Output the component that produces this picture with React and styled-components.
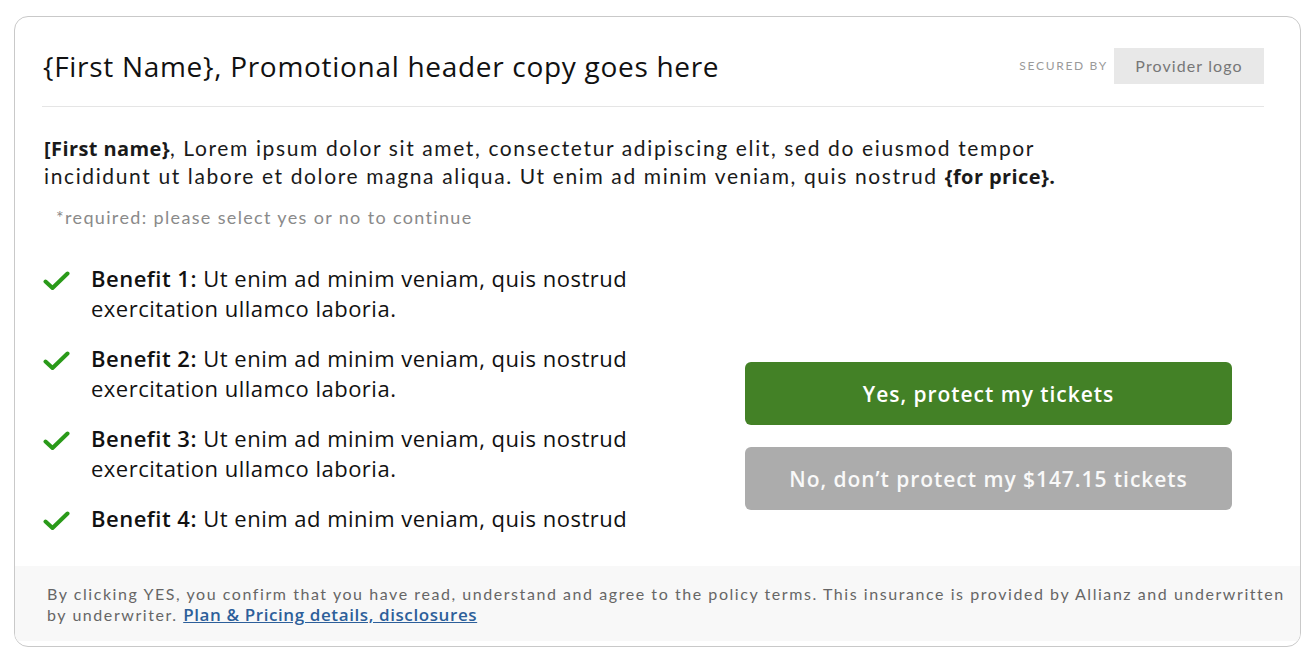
import React from "react";
import styled, { createGlobalStyle } from "styled-components";

const Global = createGlobalStyle`
  html, body { margin: 0; padding: 0; background: #fff; }
  body { width: 1312px; height: 664px; overflow: hidden; }
  * { box-sizing: border-box; }
`;

const Page = styled.div`
  padding: 16px 12px 0 14px;
`;

const Card = styled.div`
  width: 1287px;
  height: 631px;
  border: 1px solid #c9c9c9;
  border-radius: 14px;
  padding-bottom: 5px;
  display: flex;
  flex-direction: column;
  overflow: hidden;
  background: #fff;
`;

const Header = styled.div`
  margin: 0 36px 0 27px;
  height: 90px;
  display: flex;
  align-items: center;
  justify-content: space-between;
  border-bottom: 1px solid #e5e5e5;
  padding-top: 8px;
`;

const Title = styled.h1`
  margin: 0;
  font-family: "Open Sans", sans-serif;
  font-weight: 500;
  font-size: 28px;
  letter-spacing: 0.7px;
  color: #111;
  padding-left: 1px;
`;

const Secured = styled.div`
  display: flex;
  align-items: center;
  gap: 6px;
`;

const SecuredLabel = styled.span`
  font-family: "Lato", sans-serif;
  font-size: 12px;
  letter-spacing: 1.7px;
  color: #9a9a9a;
`;

const LogoBox = styled.div`
  width: 150px;
  height: 36px;
  background: #e8e8e8;
  display: flex;
  align-items: center;
  justify-content: center;
  font-family: "Lato", sans-serif;
  font-size: 16px;
  letter-spacing: 1.1px;
  color: #777;
`;

const Body = styled.div`
  flex: 1;
  overflow: hidden;
  padding: 27px 28px 0 28px;
`;

const Intro = styled.p`
  margin: 0;
  padding-left: 1px;
  font-family: "Lato", sans-serif;
  font-size: 21px;
  line-height: 27px;
  letter-spacing: 1.62px;
  color: #1a1a1a;
`;

const Strong = styled.strong`
  font-family: "Open Sans", sans-serif;
  font-weight: 700;
  font-size: 20px;
  letter-spacing: 0.4px;
`;

const Required = styled.p`
  margin: 16px 0 0 13px;
  font-family: "Lato", sans-serif;
  font-size: 18px;
  letter-spacing: 1.35px;
  color: #8a8a8a;
`;

const Row = styled.div`
  display: flex;
  justify-content: space-between;
  margin-top: 35px;
`;

const Benefits = styled.ul`
  list-style: none;
  margin: 0;
  padding: 0;
  width: 620px;
  display: flex;
  flex-direction: column;
  gap: 20px;
`;

const Benefit = styled.li`
  display: flex;
  gap: 21px;
  align-items: flex-start;
`;

const CheckIcon = styled.svg`
  flex: none;
  width: 27px;
  height: 20px;
  margin-top: 8px;
`;

const BenefitText = styled.div`
  width: 548px;
  font-family: "Open Sans", sans-serif;
  font-size: 22px;
  line-height: 30px;
  letter-spacing: 0.5px;
  color: #111;
`;

const BenefitLabel = styled.span`
  font-weight: 600;
`;

const Actions = styled.div`
  width: 487px;
  margin-right: 40px;
  padding-top: 99px;
  display: flex;
  flex-direction: column;
  gap: 22px;
`;

const Button = styled.button`
  height: 63px;
  border: none;
  border-radius: 6px;
  background: ${(p) => (p.$primary ? "#438126" : "#acacac")};
  color: ${(p) => (p.$primary ? "#fff" : "#f9f9f9")};
  font-family: "Open Sans", sans-serif;
  font-weight: 600;
  font-size: 21px;
  letter-spacing: 0.95px;
  cursor: pointer;
`;

const Footer = styled.div`
  height: 75px;
  background: #f8f8f8;
  padding: 17px 10px 0 32px;
  font-family: "Lato", sans-serif;
  font-size: 16px;
  line-height: 21px;
  letter-spacing: 1.56px;
  color: #666;
`;

const Link = styled.a`
  font-family: "Open Sans", sans-serif;
  font-weight: 600;
  font-size: 17px;
  letter-spacing: 0.6px;
  color: #2d5f9a;
  text-decoration: underline;
`;

const Check = () => (
  <CheckIcon viewBox="0 0 27 20">
    <path
      d="M2.5 10.5 L9.5 17 L24.5 2.5"
      fill="none"
      stroke="#2a9a19"
      strokeWidth="4"
      strokeLinecap="round"
      strokeLinejoin="round"
    />
  </CheckIcon>
);

const benefits = [
  { n: 1, text: "Ut enim ad minim veniam, quis nostrud exercitation ullamco laboria." },
  { n: 2, text: "Ut enim ad minim veniam, quis nostrud exercitation ullamco laboria." },
  { n: 3, text: "Ut enim ad minim veniam, quis nostrud exercitation ullamco laboria." },
  { n: 4, text: "Ut enim ad minim veniam, quis nostrud" },
];

export default function App() {
  return (
    <Page>
      <Global />
      <Card>
        <Header>
          <Title>{"{First Name}, Promotional header copy goes here"}</Title>
          <Secured>
            <SecuredLabel>SECURED BY</SecuredLabel>
            <LogoBox>Provider logo</LogoBox>
          </Secured>
        </Header>
        <Body>
          <Intro>
            <Strong>{"[First name}"}</Strong>, Lorem ipsum dolor sit amet,
            consectetur adipiscing elit, sed do eiusmod tempor
            <br />
            incididunt ut labore et dolore magna aliqua. Ut enim ad minim
            veniam, quis nostrud <Strong>{"{for price}."}</Strong>
          </Intro>
          <Required>*required: please select yes or no to continue</Required>
          <Row>
            <Benefits>
              {benefits.map((b) => (
                <Benefit key={b.n}>
                  <Check />
                  <BenefitText>
                    <BenefitLabel>Benefit {b.n}:</BenefitLabel> {b.text}
                  </BenefitText>
                </Benefit>
              ))}
            </Benefits>
            <Actions>
              <Button $primary>Yes, protect my tickets</Button>
              <Button>No, don’t protect my $147.15 tickets</Button>
            </Actions>
          </Row>
        </Body>
        <Footer>
          By clicking YES, you confirm that you have read, understand and agree
          to the policy terms. This insurance is provided by Allianz and
          underwritten by underwriter.{" "}
          <Link href="#">Plan &amp; Pricing details, disclosures</Link>
        </Footer>
      </Card>
    </Page>
  );
}
